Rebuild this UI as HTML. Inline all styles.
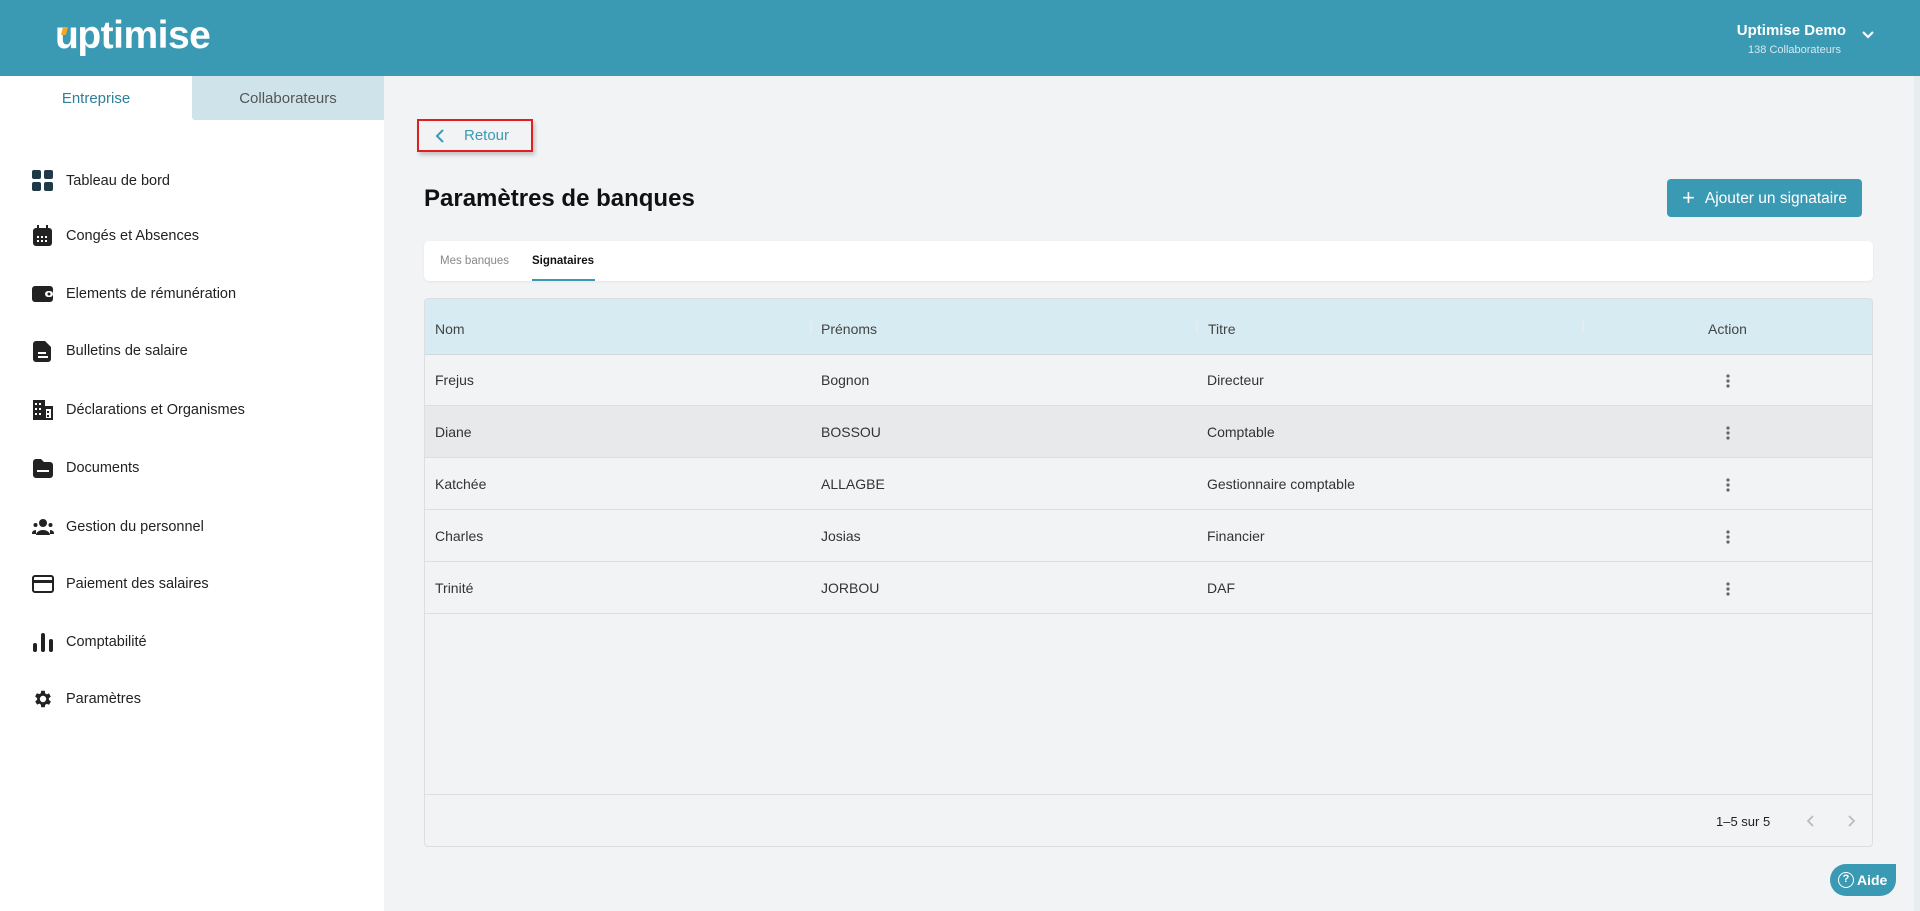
<!DOCTYPE html>
<html><head><meta charset="utf-8"><style>
*{box-sizing:border-box;margin:0;padding:0}
body{width:1920px;height:911px;overflow:hidden;background:#f2f3f5;font-family:"Liberation Sans",Arial,sans-serif;position:relative;color:#222}
.hdr{position:absolute;left:0;top:0;width:1920px;height:76px;background:#3a9ab4}
.logo{position:absolute;left:55px;top:14px;color:#fff;font-size:39px;font-weight:bold;letter-spacing:-0.5px}
.side{position:absolute;left:0;top:76px;width:384px;height:835px;background:#fff}
.tab1{position:absolute;left:0;top:0;width:192px;height:44px;text-align:center;line-height:46px;color:#2e7f98;font-size:15px}
.tab2{position:absolute;left:192px;top:0;width:192px;height:44px;background:#cfe4ea;text-align:center;line-height:46px;color:#555;font-size:15px;border-bottom-left-radius:3px}
.item{position:absolute;left:32px;height:24px;display:flex;align-items:center;font-size:14.5px;color:#222}
.item svg{width:22px;height:22px;margin-right:12px}
.abs{position:absolute}
.row{position:absolute;left:425px;width:1447px;height:52px;border-bottom:1px solid #dcdedf;font-size:14px;color:#333}
.row span{position:absolute;top:18px}
</style></head><body>
<div class="hdr">
 <div class="logo">u<span style="margin-left:-1px">ptimise</span></div>
 <div class="abs" style="left:62px;top:27px;width:5px;height:8px;background:#f5a623;transform:skewX(-15deg)"></div>
 <div class="abs" style="right:74px;top:22px;color:#fff;font-weight:bold;font-size:15px">Uptimise Demo</div>
 <div class="abs" style="right:79px;top:44px;color:#d4e8ee;font-size:11px">138 Collaborateurs</div>
 <svg class="abs" style="left:1861px;top:30px" width="14" height="10" viewBox="0 0 14 10"><path d="M2 2l5 5 5-5" stroke="#fff" stroke-width="2.2" fill="none"/></svg>
</div>
<div class="side">
 <div class="tab1">Entreprise</div><div class="tab2">Collaborateurs</div>
</div>
<div class="item" style="top:169px"><svg viewBox="0 0 22 22"><rect x="0" y="0" width="9" height="9" rx="2" fill="#1e3a48"/><rect x="12" y="0" width="9" height="9" rx="2" fill="#1e3a48"/><rect x="0" y="12" width="9" height="9" rx="2" fill="#1e3a48"/><rect x="12" y="12" width="9" height="9" rx="2" fill="#1e3a48"/></svg>Tableau de bord</div>
<div class="item" style="top:224px"><svg viewBox="0 0 22 22"><rect x="1" y="3" width="19" height="18" rx="3" fill="#222"/><rect x="5" y="0" width="2" height="5" fill="#222"/><rect x="14" y="0" width="2" height="5" fill="#222"/><g fill="#fff"><rect x="5" y="11" width="2" height="2"/><rect x="9" y="11" width="2" height="2"/><rect x="13" y="11" width="2" height="2"/><rect x="5" y="15" width="2" height="2"/><rect x="9" y="15" width="2" height="2"/><rect x="13" y="15" width="2" height="2"/></g></svg>Congés et Absences</div>
<div class="item" style="top:282px"><svg viewBox="0 0 22 22"><rect x="0" y="3" width="21" height="16" rx="3" fill="#222"/><rect x="13" y="8" width="8" height="6" rx="3" fill="#fff"/><circle cx="17" cy="11" r="1.5" fill="#222"/></svg>Elements de rémunération</div>
<div class="item" style="top:339px"><svg viewBox="0 0 22 22"><path d="M4 1h9l6 6v12a3 3 0 0 1-3 3H4a3 3 0 0 1-3-3V4a3 3 0 0 1 3-3z" fill="#222"/><rect x="6" y="12" width="8" height="2" fill="#fff"/><rect x="6" y="16" width="10" height="2" fill="#fff"/></svg>Bulletins de salaire</div>
<div class="item" style="top:398px"><svg viewBox="0 0 22 22"><path d="M1 1h12v6h8v14H1z" fill="#222"/><g fill="#fff"><rect x="3" y="4" width="2" height="2"/><rect x="7" y="4" width="2" height="2"/><rect x="3" y="9" width="2" height="2"/><rect x="7" y="9" width="2" height="2"/><rect x="3" y="14" width="2" height="2"/><rect x="7" y="14" width="2" height="2"/><rect x="14" y="10" width="5" height="9"/></g><rect x="15" y="12" width="2" height="2" fill="#222"/><rect x="15" y="16" width="2" height="2" fill="#222"/></svg>Déclarations et Organismes</div>
<div class="item" style="top:456px"><svg viewBox="0 0 22 22"><path d="M1 5a3 3 0 0 1 3-3h5l3 3h6a3 3 0 0 1 3 3v10a3 3 0 0 1-3 3H4a3 3 0 0 1-3-3z" fill="#222"/><rect x="5" y="13" width="12" height="2" fill="#fff"/></svg>Documents</div>
<div class="item" style="top:515px"><svg viewBox="0 0 22 22"><circle cx="11" cy="7" r="4" fill="#222"/><path d="M4 19a7 5 0 0 1 14 0z" fill="#222"/><circle cx="3.5" cy="9" r="2" fill="#222"/><circle cx="18.5" cy="9" r="2" fill="#222"/><path d="M0 17a4 3 0 0 1 4-3v4H0zM22 17a4 3 0 0 0-4-3v4h4z" fill="#222"/></svg>Gestion du personnel</div>
<div class="item" style="top:572px"><svg viewBox="0 0 22 22"><rect x="1" y="3" width="20" height="16" rx="2" fill="none" stroke="#222" stroke-width="2"/><rect x="1" y="7" width="20" height="3" fill="#222"/></svg>Paiement des salaires</div>
<div class="item" style="top:630px"><svg viewBox="0 0 22 22"><rect x="1" y="12" width="4" height="9" rx="2" fill="#222"/><rect x="9" y="2" width="4" height="19" rx="2" fill="#222"/><rect x="17" y="8" width="4" height="13" rx="2" fill="#222"/></svg>Comptabilité</div>
<div class="item" style="top:687px"><svg viewBox="0 0 24 24"><path fill="#222" d="M19.4 13a7.5 7.5 0 0 0 0-2l2.1-1.6-2-3.5-2.5 1a7 7 0 0 0-1.7-1L15 3h-4l-.4 2.7a7 7 0 0 0-1.7 1l-2.5-1-2 3.5L6.6 11a7.5 7.5 0 0 0 0 2l-2.1 1.6 2 3.5 2.5-1a7 7 0 0 0 1.7 1L11 21h4l.4-2.7a7 7 0 0 0 1.7-1l2.5 1 2-3.5zM13 15.5a3.5 3.5 0 1 1 0-7 3.5 3.5 0 0 1 0 7z" transform="translate(-1 0)"/></svg>Paramètres</div>

<div class="abs" style="left:417px;top:119px;width:116px;height:33px;border:2px solid #e02020;box-shadow:2px 3px 4px rgba(0,0,0,.2)"></div>
<svg class="abs" style="left:434px;top:128px" width="12" height="16" viewBox="0 0 12 16"><path d="M9 2L3 8l6 6" stroke="#3a9ab4" stroke-width="2" fill="none"/></svg>
<div class="abs" style="left:464px;top:127px;font-size:15px;color:#3a9ab4">Retour</div>
<div class="abs" style="left:424px;top:185px;font-size:24px;font-weight:bold;color:#111">Paramètres de banques</div>
<div class="abs" style="left:1667px;top:179px;width:195px;height:38px;background:#3a9ab4;border-radius:4px;color:#fff;font-size:15.5px;line-height:38px;padding-left:15px"><span style="font-size:22px;vertical-align:-2px;margin-right:10px">+</span>Ajouter un signataire</div>
<div class="abs" style="left:424px;top:241px;width:1449px;height:40px;background:#fff;border-radius:5px;box-shadow:0 1px 2px rgba(0,0,0,.06)"></div>
<div class="abs" style="left:440px;top:255px;font-size:11.5px;color:#888">Mes banques</div>
<div class="abs" style="left:532px;top:255px;font-size:11.5px;color:#111;font-weight:bold">Signataires</div>
<div class="abs" style="left:532px;top:279px;width:63px;height:2px;background:#3a9ab4"></div>

<div class="abs" style="left:424px;top:298px;width:1449px;height:549px;border:1px solid #dcdedf;border-radius:4px;background:#f2f3f5;overflow:hidden">
 <div class="abs" style="left:0;top:0;width:1449px;height:56px;background:#d7ebf2;border-bottom:1px solid #d0d8db"></div>
</div>
<div class="abs" style="left:435px;top:321px;font-size:14px;color:#444">Nom</div>
<div class="abs" style="left:810px;top:319px;width:2px;height:14px;background:#e4ecef"></div>
<div class="abs" style="left:821px;top:321px;font-size:14px;color:#444">Prénoms</div>
<div class="abs" style="left:1196px;top:319px;width:2px;height:14px;background:#e4ecef"></div>
<div class="abs" style="left:1208px;top:321px;font-size:14px;color:#444">Titre</div>
<div class="abs" style="left:1582px;top:319px;width:2px;height:14px;background:#e4ecef"></div>
<div class="abs" style="left:1708px;top:321px;font-size:14px;color:#444">Action</div>

<div class="row" style="top:354px"><span style="left:10px">Frejus</span><span style="left:396px">Bognon</span><span style="left:782px">Directeur</span></div>
<div class="row" style="top:406px;background:#e8e9ea"><span style="left:10px">Diane</span><span style="left:396px">BOSSOU</span><span style="left:782px">Comptable</span></div>
<div class="row" style="top:458px"><span style="left:10px">Katchée</span><span style="left:396px">ALLAGBE</span><span style="left:782px">Gestionnaire comptable</span></div>
<div class="row" style="top:510px"><span style="left:10px">Charles</span><span style="left:396px">Josias</span><span style="left:782px">Financier</span></div>
<div class="row" style="top:562px"><span style="left:10px">Trinité</span><span style="left:396px">JORBOU</span><span style="left:782px">DAF</span></div>
<svg class="abs" style="left:1725px;top:374px" width="6" height="224" viewBox="0 0 6 224"><g fill="#666"><circle cx="3" cy="2" r="1.6"/><circle cx="3" cy="7" r="1.6"/><circle cx="3" cy="12" r="1.6"/><circle cx="3" cy="54" r="1.6"/><circle cx="3" cy="59" r="1.6"/><circle cx="3" cy="64" r="1.6"/><circle cx="3" cy="106" r="1.6"/><circle cx="3" cy="111" r="1.6"/><circle cx="3" cy="116" r="1.6"/><circle cx="3" cy="158" r="1.6"/><circle cx="3" cy="163" r="1.6"/><circle cx="3" cy="168" r="1.6"/><circle cx="3" cy="210" r="1.6"/><circle cx="3" cy="215" r="1.6"/><circle cx="3" cy="220" r="1.6"/></g></svg>
<div class="abs" style="left:425px;top:794px;width:1447px;height:1px;background:#dcdedf"></div>
<div class="abs" style="left:1716px;top:814px;font-size:13px;color:#222">1–5 sur 5</div>
<svg class="abs" style="left:1805px;top:813px" width="12" height="16" viewBox="0 0 12 16"><path d="M8 3L3 8l5 5" stroke="#bbb" stroke-width="1.8" fill="none"/></svg>
<svg class="abs" style="left:1845px;top:813px" width="12" height="16" viewBox="0 0 12 16"><path d="M4 3l5 5-5 5" stroke="#bbb" stroke-width="1.8" fill="none"/></svg>
<div class="abs" style="left:1830px;top:864px;width:66px;height:32px;background:#3a9ab4;border-radius:16px 0 16px 16px;color:#fff;font-weight:bold;font-size:14px;display:flex;align-items:center;padding-left:8px;gap:3px"><span style="display:inline-block;width:16px;height:16px;border:1.5px solid #fff;border-radius:50%;font-size:11px;line-height:13px;text-align:center">?</span>Aide</div>
<div class="abs" style="left:1914px;top:76px;width:6px;height:835px;background:#e6edef"></div>
</body></html>
